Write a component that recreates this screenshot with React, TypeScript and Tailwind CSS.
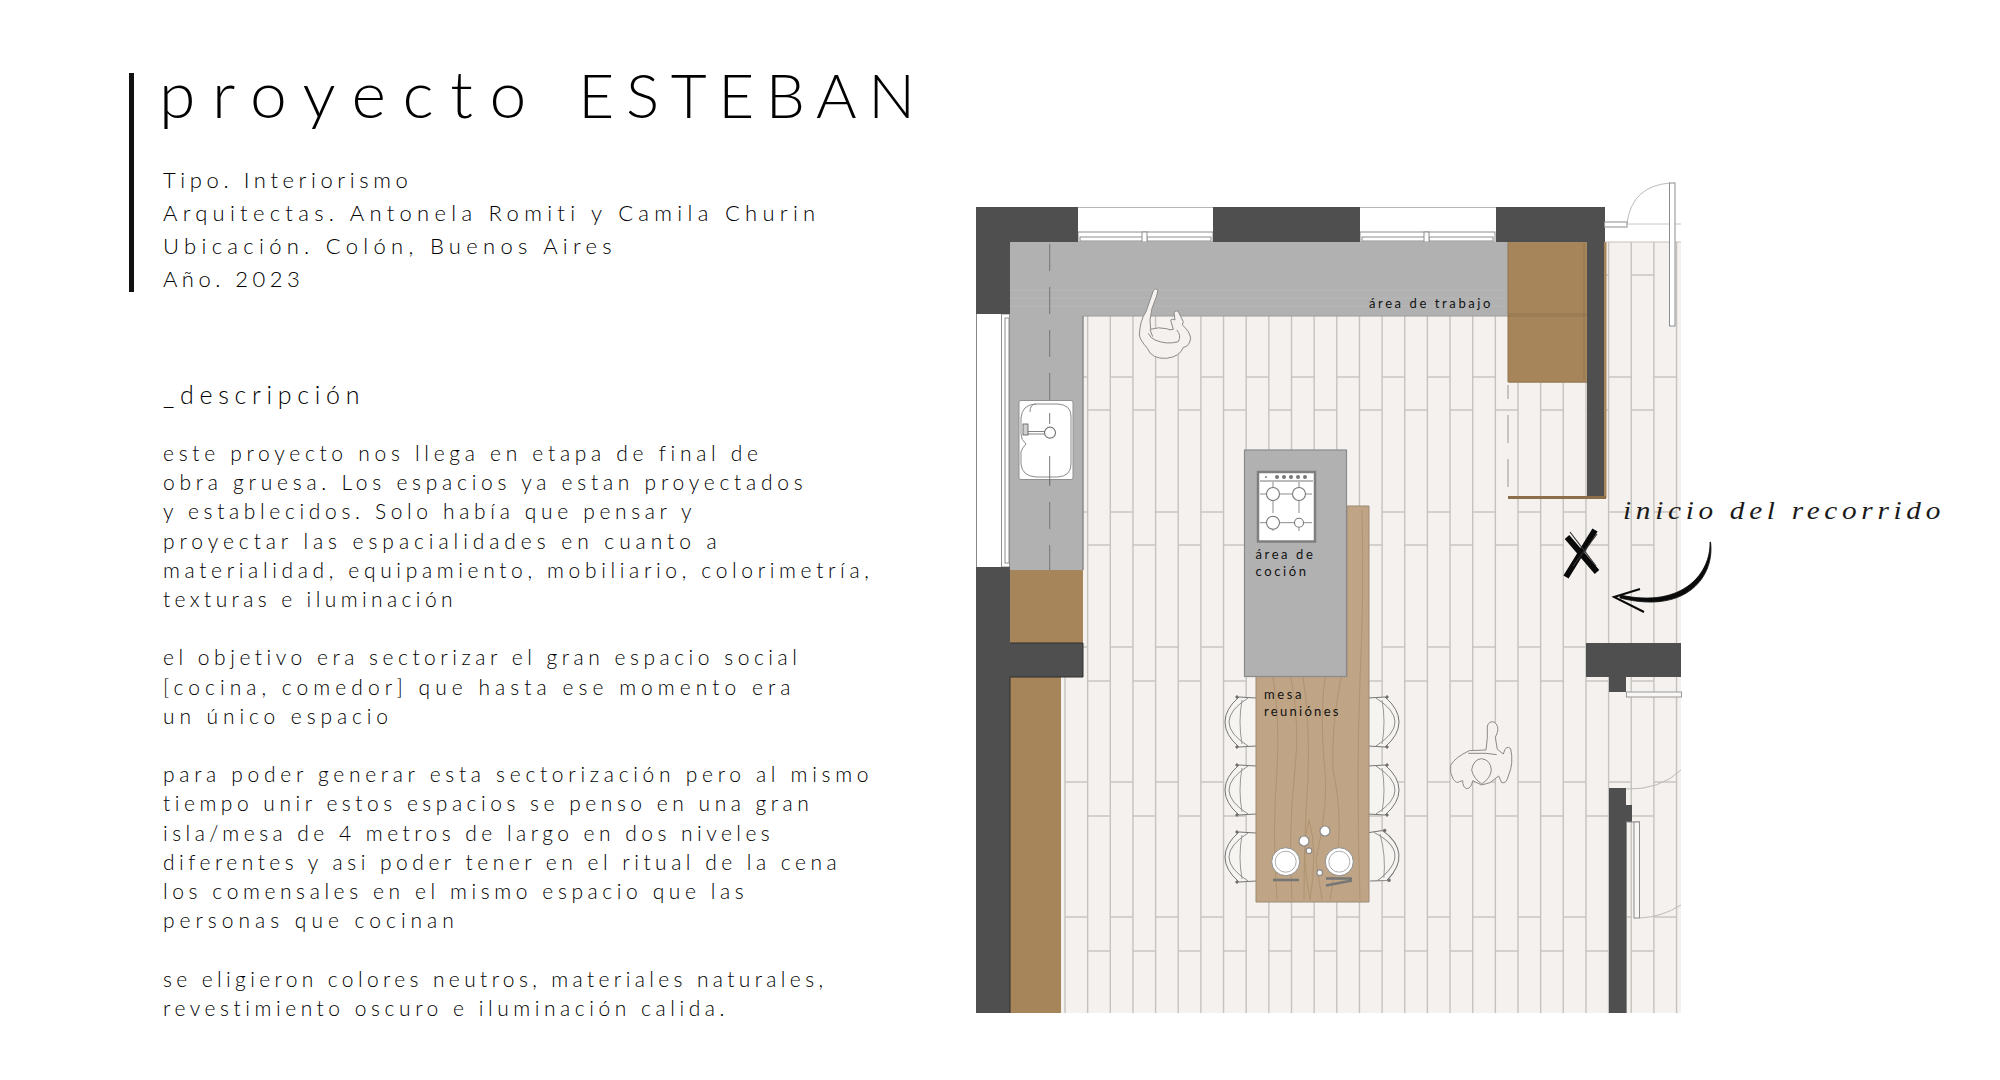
import React from "react";

const lines: number[] = Array.from({ length: 28 }, (_, i) => 1065 + 22.65 * i);
const rowsA = [377, 512, 647, 782, 917];
const rowsB = [275, 410, 545, 681, 816, 951];

function Floor() {
  return (
    <g>
      <rect x={1061} y={242} width={620} height={771} fill="#f4f1ee" />
      {lines.map((x) => (
        <line key={x} x1={x} y1={242} x2={x} y2={1013} stroke="#c6c3be" strokeWidth={1.4} />
      ))}
      {lines.slice(0, -1).map((x, i) =>
        (i % 2 === 0 ? rowsA : rowsB).map((y) => (
          <line key={`${i}-${y}`} x1={x} y1={y} x2={Math.min(x + 22.65, 1681)} y2={y} stroke="#c6c3be" strokeWidth={1.4} />
        ))
      )}
    </g>
  );
}

function Chair({ y, side, tilt = 0 }: { y: number; side: "l" | "r"; tilt?: number }) {
  const t = side === "l" ? `translate(1256 ${y})` : `translate(1368 ${y}) scale(-1 1) rotate(${tilt})`;
  return (
    <g transform={t} fill="none" stroke="#757575" strokeWidth={1}>
      <path d="M0 -24 L-17 -25 Q-31 -13 -31 0 Q-31 13 -17 25 L0 24" fill="#f6f4f1" />
      <path d="M-8 -24 Q-27 -12 -27 0 Q-27 12 -8 24" stroke="#8c8c8c" />
      <path d="M-14 -22 Q-18 0 -14 22" stroke="#999" />
      <circle cx={-19} cy={-25} r={1.2} fill="#666" />
      <circle cx={-19} cy={25} r={1.2} fill="#666" />
    </g>
  );
}

function Plate({ cx }: { cx: number }) {
  return (
    <g>
      <circle cx={cx} cy={861.7} r={14} fill="#fff" stroke="#8f8f8f" strokeWidth={1} />
      <circle cx={cx} cy={861.7} r={10.5} fill="#fff" stroke="#9a9a9a" strokeWidth={0.8} />
    </g>
  );
}

function Plan() {
  const wall = "#4f4f4f";
  const brown = "#a6855b";
  const counter = "#b1b1b1";
  return (
    <svg width={1000} height={860} viewBox="960 170 1000 860" className="block">
      <Floor />
      {/* windows */}
      <line x1={1078} y1={207.5} x2={1496} y2={207.5} stroke="#b5b5b5" strokeWidth={1.2} />
      {[1078, 1360].map((x) => (
        <g key={x} fill="#fff" stroke="#8e8e8e" strokeWidth={1}>
          <rect x={x} y={232} width={135} height={10} />
          <rect x={x + 2} y={237} width={64} height={4} />
          <rect x={x + 69} y={237} width={64} height={4} />
          <rect x={x + 64} y={232} width={5} height={10} />
        </g>
      ))}
      <line x1={976.5} y1={314} x2={976.5} y2={567} stroke="#888" strokeWidth={1} />
      <g fill="#fff" stroke="#8e8e8e" strokeWidth={1}>
        <rect x={1001.5} y={314} width={8} height={253} />
        <rect x={1005} y={318} width={4} height={245} />
      </g>
      {/* counters */}
      <path d="M1010 242 H1509 V316 H1083 V570 H1010 Z" fill={counter} />
      <path d="M1083 316 V570" stroke="#8b8b8b" strokeWidth={1.5} />
      <path d="M1083 316 H1509" stroke="#9c9c9c" strokeWidth={1} />
      <path d="M1010 290 H1509 M1010 298 H1509 M1010 306 H1509" stroke="#bcbcbc" strokeWidth={1} opacity={0.6} />
      <line x1={1049.7} y1={244} x2={1049.7} y2={570} stroke="#777" strokeWidth={1} strokeDasharray="27 16" />
      {/* sink */}
      <rect x={1019} y={400.5} width={54} height={79} rx={2} fill="#fff" stroke="#8f8f8f" strokeWidth={1} />
      <path d="M1035 404 Q1022 405 1021 418 V434 Q1021 440 1026 444 Q1022 448 1021 452 V464 Q1022 476 1036 477 H1058 Q1071 476 1071 464 V416 Q1071 405 1058 404 Z" fill="#fff" stroke="#8a8a8a" strokeWidth={1} />
      <path d="M1030 412 Q1030 404 1036 404" fill="none" stroke="#8a8a8a" strokeWidth={1} />
      <line x1={1049.7} y1={413} x2={1049.7} y2={424} stroke="#777" strokeWidth={1} />
      <line x1={1049.7} y1={456} x2={1049.7} y2={484} stroke="#777" strokeWidth={1} />
      <rect x={1024} y={431.5} width={24} height={2.5} fill="#fff" stroke="#666" strokeWidth={0.8} />
      <rect x={1023} y={424} width={5} height={11} fill="#cfcfcf" stroke="#555" strokeWidth={0.8} />
      <circle cx={1050} cy={432.7} r={5.5} fill="#fff" stroke="#777" strokeWidth={1.2} />
      {/* cabinets */}
      <rect x={1508} y={242} width={79} height={140.5} fill={brown} />
      <path d="M1508.5 382 H1587 M1508 314 H1587 M1508 242 V382 M1584 243 V380" fill="none" stroke="#8e7450" strokeWidth={1} />
      <path d="M1508 316 H1586" stroke="#8e7450" strokeWidth={1} />
      <rect x={1604} y={242} width={2.5} height={256} fill={brown} />
      <rect x={1508} y={496} width={98} height={3} fill="#8b6f49" />
      <line x1={1508} y1={385} x2={1508} y2={496} stroke="#a8a6a2" strokeWidth={1.2} strokeDasharray="28 16" strokeDashoffset={-30} />
      <rect x={1010} y={570} width={73} height={73} fill={brown} />
      <rect x={1010} y={677} width={51} height={336} fill={brown} />
      {/* walls */}
      <g fill={wall}>
        <path d="M976 207 H1078 V242 H1010 V314 H976 Z" />
        <rect x={1213} y={207} width={147} height={35} />
        <rect x={1496} y={207} width={109} height={35} />
        <rect x={1587} y={242} width={17} height={254} />
        <path d="M976 567 H1010 V643 H1083 V677 H1010 V1013 H976 Z" />
        <rect x={1586} y={643} width={95} height={34} />
        <rect x={1609} y={677} width={17} height={15} />
        <rect x={1609} y={788} width={17} height={225} />
        <rect x={1626} y={805} width={6} height={17} />
      </g>
      <path d="M1010 677 V1013 M1010 643 H1083 V677 H1010" fill="none" stroke="#2f2f2f" strokeWidth={1} />
      {/* doors */}
      <path d="M1627 223 Q1632 186 1670 183" fill="none" stroke="#bcbcbc" strokeWidth={1} />
      <line x1={1627} y1={224} x2={1681} y2={224} stroke="#c6c6c6" strokeWidth={1} />
      <line x1={1606} y1={242} x2={1681} y2={242} stroke="#c6c3be" strokeWidth={1} />
      <rect x={1604.5} y={222} width={22.5} height={5} fill="#fff" stroke="#8c8c8c" strokeWidth={1} />
      <rect x={1669.5} y={183} width={5.5} height={143} fill="#fff" stroke="#8c8c8c" strokeWidth={1} />
      <rect x={1626.5} y={692} width={55} height={5} fill="#f8f7f5" stroke="#999" strokeWidth={1} />
      <path d="M1626 789 Q1660 790 1681 770 M1640 918 Q1662 917 1681 905" fill="none" stroke="#bcbcbc" strokeWidth={1} />
      <path d="M1626 822 H1640 M1626.5 822 V1013" fill="none" stroke="#8c8c8c" strokeWidth={1} />
      <rect x={1634} y={822} width={5.5} height={96} fill="#f8f7f5" stroke="#8c8c8c" strokeWidth={1} />
      {/* chairs sit under the table edge */}
      {[722, 790, 857].map((y) => (
        <g key={y}>
          <Chair y={y} side="l" />
          <Chair y={y} side="r" tilt={y === 857 ? 5 : 0} />
        </g>
      ))}
      {/* table */}
      <path d="M1347 506 H1369 V902 H1256 V676 H1347 Z" fill="#bfa486" stroke="#9c8a72" strokeWidth={1} />
      <g fill="none" stroke="#ab8d68" strokeWidth={0.9} opacity={0.8}>
        <path d="M1273 677 Q1280 720 1277 770 Q1272 830 1277 900" />
        <path d="M1291 677 Q1300 725 1295 770 Q1288 830 1292 900" />
        <path d="M1303 677 Q1310 720 1308 780 Q1304 830 1304 900" />
        <path d="M1325 677 Q1320 715 1324 760 Q1330 800 1316 860 L1322 900" />
        <path d="M1341 677 Q1331 730 1333 770 Q1342 810 1338 850 L1330 900" />
        <path d="M1362 510 Q1364 600 1360 680 Q1356 780 1360 900" />
        <path d="M1309 820 Q1300 850 1310 900 M1309 820 Q1318 850 1310 900" />
      </g>
      <Plate cx={1285.7} />
      <Plate cx={1339.3} />
      <g fill="#fff" stroke="#8a8a8a" strokeWidth={1.2}>
        <circle cx={1304} cy={841} r={5} />
        <circle cx={1325} cy={831} r={5} />
        <circle cx={1309} cy={850.7} r={2.8} />
        <circle cx={1319.7} cy={872.7} r={2.8} />
      </g>
      <path d="M1273 880 H1299 M1326 878.5 H1352 M1326 885.5 L1352 880.5" stroke="#767676" strokeWidth={2.4} />
      {/* island */}
      <rect x={1244.5} y={450} width={102} height={226.5} fill={counter} stroke="#8a8a8a" strokeWidth={1.2} />
      <rect x={1258} y={472} width={57} height={69.5} fill="#fff" stroke="#7f7f7f" strokeWidth={2.5} />
      <path d="M1260 481 H1313" stroke="#777" strokeWidth={1} />
      <g fill="#777">
        <circle cx={1266} cy={477} r={1} />
        <circle cx={1277} cy={477} r={2} />
        <circle cx={1284} cy={477} r={2} />
        <circle cx={1291} cy={477} r={2} />
        <circle cx={1298} cy={477} r={2} />
        <circle cx={1305} cy={477} r={2} />
      </g>
      <path d="M1273 482 V536 M1299 482 V536" stroke="#8b8b8b" strokeWidth={1} strokeDasharray="13 5" />
      <path d="M1260 494 H1312 M1260 522.7 H1312" stroke="#8b8b8b" strokeWidth={1} />
      <g fill="#fff" stroke="#777" strokeWidth={1.1}>
        <circle cx={1273} cy={494} r={6.5} />
        <circle cx={1299} cy={494} r={6.5} />
        <circle cx={1273} cy={522.7} r={6.5} />
        <circle cx={1299} cy={522.7} r={4.5} />
      </g>
      {/* people */}
      <g transform="translate(1120 270) scale(0.3333)" fill="#f4f1ee" stroke="#8a8a8a" strokeWidth={3}>
        <path d="M100 62 Q106 52 114 60 L110 78 L96 115 L90 150 L92 178 Q115 170 140 176 Q150 182 160 178 L152 150 Q158 145 165 150 L162 128 Q168 118 175 125 L190 155 L187 165 Q210 185 212 205 Q208 230 190 232 Q180 260 140 265 Q95 268 82 235 Q60 210 58 195 Q60 150 78 125 Z" />
        <path d="M85 190 Q92 205 105 210 M105 210 Q140 225 175 215 M175 215 Q185 195 170 180 M90 178 L98 200" fill="none" />
      </g>
      <g transform="translate(1400 600) scale(0.3333)" fill="#f4f1ee" stroke="#8a8a8a" strokeWidth={3}>
        <path d="M262 378 Q268 362 282 366 Q298 376 292 398 L286 412 L292 448 L310 462 Q318 432 332 446 Q342 490 325 528 Q320 552 305 548 L296 528 L270 548 L245 555 L218 542 Q214 566 200 566 Q188 562 188 542 L178 545 Q170 552 160 538 Q148 520 152 496 Q165 472 208 452 L258 450 L262 415 Z" />
        <path d="M215 510 Q220 478 245 476 Q272 480 274 510 Q272 535 245 552 Q220 535 215 510 Z" />
        <path d="M205 460 H258 L290 464" fill="none" />
      </g>
      {/* labels */}
      <g fontFamily="Lato, sans-serif" fontSize={13} letterSpacing={2.6} fill="#111">
        <text x={1369} y={308}>área de trabajo</text>
        <text x={1255.5} y={559}>área de</text>
        <text x={1255.5} y={576}>coción</text>
        <text x={1264} y={699}>mesa</text>
        <text x={1264} y={716} letterSpacing={2.3}>reuniónes</text>
      </g>
      {/* marker */}
      <path d="M1567 537 L1597 572 M1595 530 L1566 577" stroke="#0a0a0a" strokeWidth={6} fill="none" />
      <path d="M1570 532 L1596 566 M1597 534 L1573 566" stroke="#333" strokeWidth={1.2} fill="none" />
      <path d="M1710 542 C1711 572 1684 609 1620 595 L1620 598 C1688 615 1715 575 1710.5 542 Z" fill="#0a0a0a" stroke="#0a0a0a" strokeWidth={0.8} />
      <path d="M1640 589 L1614 597 L1644 612" fill="none" stroke="#0a0a0a" strokeWidth={2} />
      <text x={1623} y={519} textLength={322} lengthAdjust="spacingAndGlyphs" letterSpacing={4} fontFamily="'Liberation Serif', serif" fontStyle="italic" fontSize={25} fill="#1a1a1a">
        inicio del recorrido
      </text>
    </svg>
  );
}

const paragraphs: { text: string; cls: string }[][] = [
  [
    { text: "este proyecto nos llega en etapa de final de", cls: "tracking-[4.71px]" },
    { text: "obra gruesa. Los espacios ya estan proyectados", cls: "tracking-[4.75px]" },
    { text: "y establecidos. Solo había que pensar y", cls: "tracking-[4.65px]" },
    { text: "proyectar las espacialidades en cuanto a", cls: "tracking-[4.94px]" },
    { text: "materialidad, equipamiento, mobiliario, colorimetría,", cls: "tracking-[4.65px]" },
    { text: "texturas e iluminación", cls: "tracking-[4.4px]" },
  ],
  [
    { text: "el objetivo era sectorizar el gran espacio social", cls: "tracking-[4.52px]" },
    { text: "[cocina, comedor] que hasta ese momento era", cls: "tracking-[5.04px]" },
    { text: "un único espacio", cls: "tracking-[4.9px]" },
  ],
  [
    { text: "para poder generar esta sectorización pero al mismo", cls: "tracking-[4.7px]" },
    { text: "tiempo unir estos espacios se penso en una gran", cls: "tracking-[4.52px]" },
    { text: "isla/mesa de 4 metros de largo en dos niveles", cls: "tracking-[4.47px]" },
    { text: "diferentes y asi poder tener en el ritual de la cena", cls: "tracking-[4.5px]" },
    { text: "los comensales en el mismo espacio que las", cls: "tracking-[4.59px]" },
    { text: "personas que cocinan", cls: "tracking-[5px]" },
  ],
  [
    { text: "se eligieron colores neutros, materiales naturales,", cls: "tracking-[4.37px]" },
    { text: "revestimiento oscuro e iluminación calida.", cls: "tracking-[4.55px]" },
  ],
];

export default function App() {
  return (
    <div className="flex w-[2000px] h-[1080px] bg-white overflow-hidden text-black font-['Lato',sans-serif]">
      <div className="w-[960px] pl-[129px] pt-[73px]">
        <div className="flow-root border-l-[5px] border-[#111] h-[219px] pl-[29px]">
          <h1 className="text-[64px] leading-[64px] font-light whitespace-nowrap -mt-[12px] -ml-[4px]">
            <span className="text-[66px] tracking-[16.6px]">proyecto </span>
            <span className="text-[62px] tracking-[11.6px] ml-[1px]">ESTEBAN</span>
          </h1>
          <div className="mt-[37px] text-[22px] leading-[33px] font-light tracking-[5.3px] whitespace-nowrap">
            <div className="tracking-[4.6px]">Tipo. Interiorismo</div>
            <div>Arquitectas. Antonela Romiti y Camila Churin</div>
            <div>Ubicación. Colón, Buenos Aires</div>
            <div className="tracking-[4.5px]">Año. 2023</div>
          </div>
        </div>
        <div className="pl-[34px]">
          <h2 className="mt-[86px] text-[25px] leading-[32px] font-light tracking-[5.7px]">_descripción</h2>
          <div className="mt-[28px] text-[21px] leading-[29.2px] font-light whitespace-nowrap flex flex-col gap-[29.2px]">
            {paragraphs.map((p, i) => (
              <div key={i}>
                {p.map((l) => (
                  <div key={l.text} className={l.cls}>
                    {l.text}
                  </div>
                ))}
              </div>
            ))}
          </div>
        </div>
      </div>
      <div className="pt-[170px]">
        <Plan />
      </div>
    </div>
  );
}
